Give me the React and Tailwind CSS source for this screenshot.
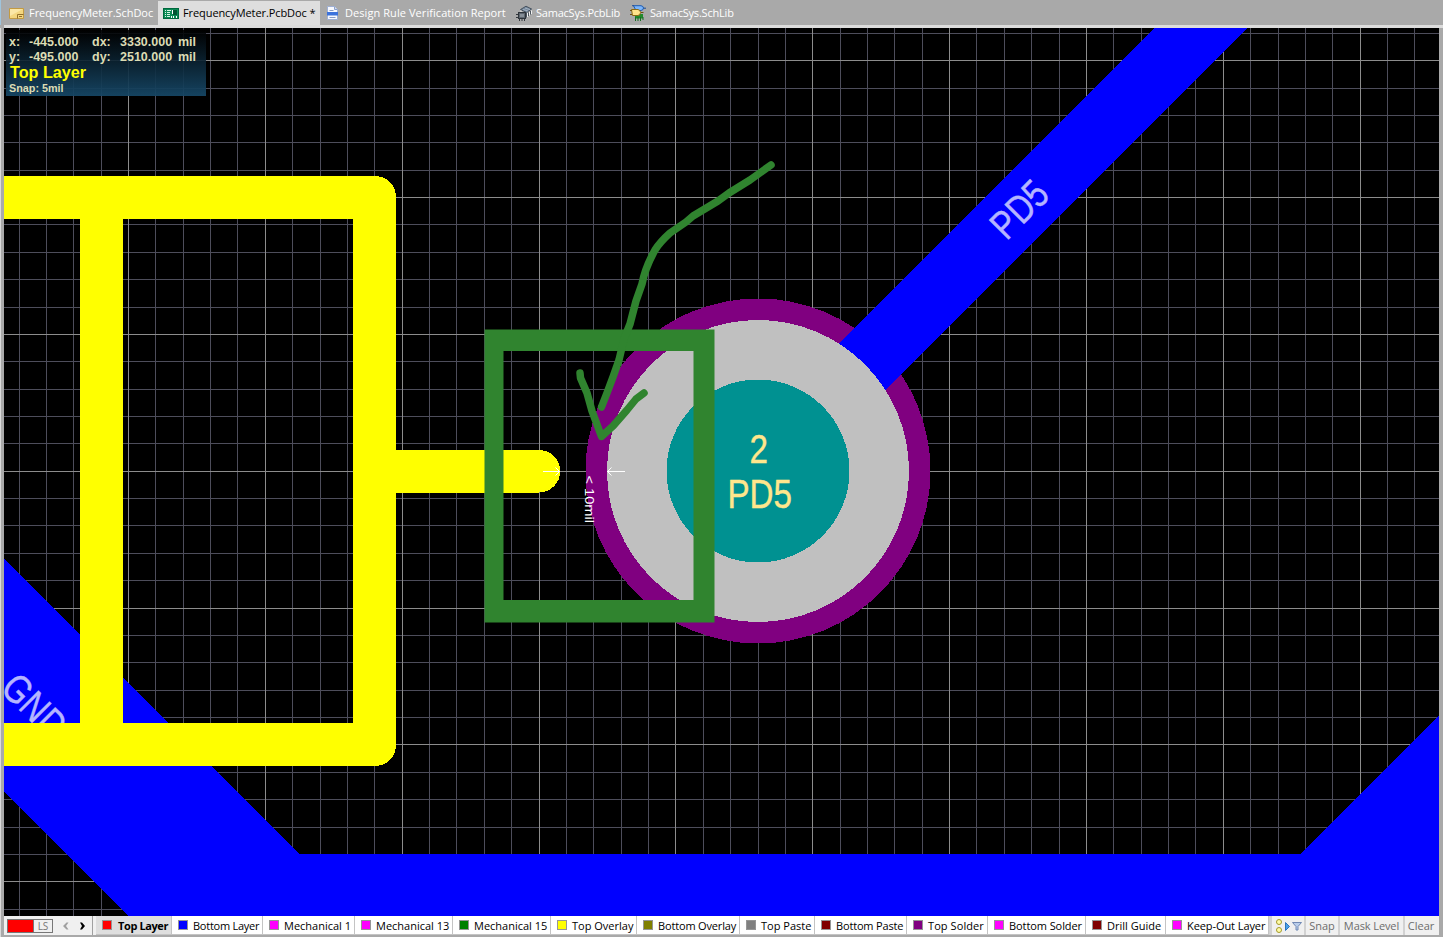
import React from "react";

const STEP = 27.37;
const vLines = Array.from({ length: 53 }, (_, i) => i - 39).map((k) => ({
  p: Math.floor(1086.44 + STEP * k),
  major: (k + 100) % 5 === 0,
}));
const hLines = Array.from({ length: 33 }, (_, i) => i - 1).map((k) => ({
  p: Math.floor(60.7 + STEP * k),
  major: (k + 100) % 5 === 0,
}));

const MINOR = "#4d4d5b";
const MAJOR = "#8c8c8c";

function Grid() {
  const lines = (major) => (
    <>
      {vLines.filter((l) => l.major === major).map((l) => (
        <rect key={"v" + l.p} x={l.p} y="28" width="1" height="888" fill={major ? MAJOR : MINOR} />
      ))}
      {hLines.filter((l) => l.major === major).map((l) => (
        <rect key={"h" + l.p} x="4" y={l.p} width="1435" height="1" fill={major ? MAJOR : MINOR} />
      ))}
    </>
  );
  return (
    <>
      {lines(false)}
      {lines(true)}
    </>
  );
}

function Board() {
  return (
    <svg className="block h-[888px] w-[1435px]" viewBox="4 28 1435 888" fontFamily="Liberation Sans, Arial, sans-serif">
      <g shapeRendering="crispEdges">
        <rect x="4" y="28" width="1435" height="888" fill="#000" />
        <Grid />
        <path d="M4 559 L299 854 H1300 L1439 715 V916 H128 L4 792 Z" fill="#0000ff" />
        <circle cx="758" cy="471" r="172.5" fill="#800080" />
        <path d="M1154 28 H1247.5 L804.5 471 H711 Z" fill="#0000ff" />
        <circle cx="758" cy="471" r="151" fill="#c0c0c0" />
        <circle cx="758" cy="471" r="91.5" fill="#009191" />
      </g>
      <g fill="#b4b4ff" stroke="#b4b4ff" strokeWidth=".4" fontSize="40">
        <text transform="translate(-1 690) rotate(45)" textLength="73" lengthAdjust="spacingAndGlyphs">GND</text>
        <text transform="translate(1006.5 241.5) rotate(-45)" textLength="63.500" lengthAdjust="spacingAndGlyphs">PD5</text>
      </g>
      <g shapeRendering="crispEdges" fill="#ffff00">
        <path fillRule="evenodd" d="M4 176 H375 A21 21 0 0 1 396 197 V450 H539 A21.2 21.2 0 0 1 539 492.5 H396 V745 A21 21 0 0 1 375 766 H4 V723 H80 V219 H4 Z M123 219 V723 H353 V219 Z" />
      </g>
      <g fill="#ffe68c" stroke="#ffe68c" strokeWidth=".4" fontSize="40">
        <text x="749.5" y="462.500" textLength="18.5" lengthAdjust="spacingAndGlyphs">2</text>
        <text x="727.5" y="508" textLength="64.5" lengthAdjust="spacingAndGlyphs">PD5</text>
      </g>
      <g stroke="#fff" strokeWidth="1" fill="none">
        <path d="M543 471.500 H560 M555.500 467.500 L559.500 471.500 L555.500 475.500" />
        <path d="M625 471.500 H607 M611.500 467.500 L607.500 471.500 L611.500 475.500" />
      </g>
      <path d="M560 471.500 H586" stroke={MAJOR} />
      <text transform="translate(585 475.500) rotate(90)" fontSize="13" fill="#fff" textLength="47.500" lengthAdjust="spacingAndGlyphs">&lt; 10mil</text>
      <path fillRule="evenodd" d="M484.500 329.500 H714.500 V622.500 H484.500 Z M503.500 351 V600 H693.500 V351 Z" fill="#30842f" />
      <g fill="none" stroke="#30842f" strokeWidth="7.500" strokeLinecap="round" strokeLinejoin="round">
        <path d="M771 165 L750 180 L729 193 L718 201 L693 216 L686 222 L670 233 Q660 242 655 250 Q645 268 642 284 L636 301 L630 324 L624 339 L619 360 L613 377 L607 393 L601.500 407" />
        <path d="M580 373 L580.500 378 L587 393 L592 411 L601.500 436.500 L613 426 L627 410 L636 399 L644 393" />
      </g>
    </svg>
  );
}

function SchIcon() {
  return (
    <svg className="h-4 w-4" viewBox="0 0 16 16">
      <path d="M.5 3.500 H14.500 V13.500 H.5 Z" fill="#f3d67f" stroke="#c29a43" />
      <path d="M1 4 H14 L1 11 Z" fill="#fbe7a6" />
      <path d="M8.500 13.500 V9.500 H14.500 M10 11.500 H13" stroke="#94702c" fill="none" />
    </svg>
  );
}
function PcbIcon() {
  return (
    <svg className="h-4 w-4" viewBox="0 0 16 16" shapeRendering="crispEdges">
      <rect x="0" y="3" width="16" height="11" fill="#00693d" />
      <rect x="1" y="4" width="14" height="9" fill="#0b8a55" />
      <path d="M2 5h1v1H2zM2 7h1v1H2zM2 9h1v1H2zM2 11h1v1H2zM4 5h4v1H4zM4 7h3v1H4zM4 9h3v1H4zM4 11h3v1H4z" fill="#d6f5e4" />
      <path d="M10 5h4v5h-4z" fill="#005431" />
      <path d="M9 5h1v4H9zM8 11h1v2H8zM10 11h1v2h-1zM13 11h1v2h-1z" fill="#fff" />
    </svg>
  );
}
function ReportIcon() {
  return (
    <svg className="h-4 w-4" viewBox="0 0 16 16">
      <path d="M2.500 1.500 H9.500 L12.500 4.500 V14.500 H2.500 Z" fill="#f7f9ff" stroke="#9fb0d4" />
      <path d="M9.500 1.500 V4.500 H12.500" fill="#d4dff5" stroke="#8da1ca" />
      <path d="M4.500 5.500 H8.500 M4.500 12.500 H10.500" stroke="#879bc5" />
      <rect x="2" y="7" width="11" height="3.500" fill="#3b72dc" />
    </svg>
  );
}
function PcbLibIcon() {
  return (
    <svg className="h-4 w-4" viewBox="0 0 16 16">
      <path d="M4.500 4.500 L10 1.200 L15.600 4 L10.500 7.500 Z" fill="#75879b" stroke="#35414f" strokeWidth=".8" />
      <path d="M7 4.500 L12 6 M9 3 L14 4.600" stroke="#b6c3d0" strokeWidth=".7" />
      <path d="M5 5.500V7.500M11.500 8V12M13.500 7V10.500M15.500 5.500V9" stroke="#f0f0f0" />
      <path d="M10.500 8V12.500M12.500 7.500V11M14.500 6V9.500" stroke="#414b55" strokeWidth=".9" />
      <rect x="2.500" y="7.500" width="7" height="6" fill="#5d656e" stroke="#2f353b" />
      <rect x="4" y="9" width="4" height="3" fill="#868e96" />
      <path d="M0 9.500h2M0 12.500h2M3.500 14v2M6 14v2M8.500 14v2" stroke="#33383e" />
    </svg>
  );
}
function SchLibIcon() {
  return (
    <svg className="h-4 w-4" viewBox="0 0 16 16">
      <path d="M3.500 .7 H11 Q13.500 1.200 13.500 3 Q13.500 5 11 5.500 H6 Z" fill="#7db6fa" stroke="#1e5bb0" />
      <path d="M2 .7H4M13.500 3.200H16" stroke="#1e4f99" />
      <rect x="5" y="9" width="8" height="4.500" fill="#218a2b" />
      <path d="M5.500 12v4M8 12v4M10.500 12v4M13 12v3" stroke="#176e22" />
      <path d="M1.500 4.500 H8 Q10.500 5 10.500 7.500 Q10.500 10 8 10.500 H2.500 Z" fill="#ffe38a" stroke="#8c6a13" />
      <path d="M0 5.500H2M0 9.500H2M11 7.500H13.500" stroke="#6b4f10" />
    </svg>
  );
}

const docs = [
  { icon: SchIcon, label: "FrequencyMeter.SchDoc", cls: "w-[154px] text-white", t: "tracking-[-0.04px]" },
  { icon: PcbIcon, label: "FrequencyMeter.PcbDoc *", cls: "w-[162px] bg-[#dedede] text-black", t: "tracking-[-0.09px]" },
  { icon: ReportIcon, label: "Design Rule Verification Report", cls: "w-[191px] text-white", t: "tracking-[0.07px]" },
  { icon: PcbLibIcon, label: "SamacSys.PcbLib", cls: "w-[114px] text-white", t: "tracking-[-0.22px]" },
  { icon: SchLibIcon, label: "SamacSys.SchLib", cls: "w-[114px] text-white", t: "tracking-[-0.2px]" },
];

const layers = [
  { name: "Top Layer", w: "w-[76px]", c: "bg-[#ff0000]", active: true, t: "tracking-[-0.4px] pl-px" },
  { name: "Bottom Layer", w: "w-[91px]", c: "bg-[#0000ff]", t: "tracking-[-0.25px]" },
  { name: "Mechanical 1", w: "w-[92px]", c: "bg-[#ff00ff]", t: "" },
  { name: "Mechanical 13", w: "w-[98px]", c: "bg-[#ff00ff]", t: "" },
  { name: "Mechanical 15", w: "w-[98px]", c: "bg-[#008000]", t: "" },
  { name: "Top Overlay", w: "w-[86px]", c: "bg-[#ffff00]", t: "" },
  { name: "Bottom Overlay", w: "w-[103px]", c: "bg-[#808000]", t: "tracking-[-0.16px]" },
  { name: "Top Paste", w: "w-[75px]", c: "bg-[#808080]", t: "" },
  { name: "Bottom Paste", w: "w-[92px]", c: "bg-[#800000]", t: "tracking-[-0.17px]" },
  { name: "Top Solder", w: "w-[81px]", c: "bg-[#800080]", t: "tracking-[0.08px]" },
  { name: "Bottom Solder", w: "w-[98px]", c: "bg-[#ff00ff]", t: "tracking-[-0.08px]" },
  { name: "Drill Guide", w: "w-[80px]", c: "bg-[#800000]", t: "" },
  { name: "Keep-Out Layer", w: "w-[103px]", c: "bg-[#ff00ff]", t: "tracking-[-0.08px]" },
];

function Hud() {
  return (
    <div className="absolute left-[2px] top-[2px] h-[66px] w-[200px] bg-linear-to-b/srgb from-[#000000e0] to-[#164766f0] font-['Liberation_Sans',Arial,sans-serif] font-bold whitespace-pre text-[#dcdcb4]">
      <div className="grid h-[34px] grid-cols-[20px_63px_28px_58px_24px] pl-[3px] pt-[5px] text-[12.5px] leading-[15px]">
        <span>x:</span><span>-445.000</span><span>dx:</span><span>3330.000</span><span>mil</span>
        <span>y:</span><span>-495.000</span><span>dy:</span><span>2510.000</span><span>mil</span>
      </div>
      <div className="pl-[4px] text-[16.200px] leading-[17px] text-[#ffff00]">Top Layer</div>
      <div className="pl-[3px] text-[10.800px] leading-[14px]">Snap: 5mil</div>
    </div>
  );
}

export default function App() {
  return (
    <div className="flex h-[937px] w-[1443px] flex-col overflow-hidden bg-[#a9a9a9] font-['Open_Sans','Noto_Sans',sans-serif] text-[11px] whitespace-nowrap">
      <div className="flex h-[25px] shrink-0 border-l border-[#9fc4dc] pl-[3px] pt-px">
        {docs.map((d) => (
          <div key={d.label} className={"flex shrink-0 items-center gap-[4px] pl-[5px] " + d.cls}>
            <span className="shrink-0"><d.icon /></span>
            <span className={d.t}>{d.label}</span>
          </div>
        ))}
      </div>
      <div className="ml-[4px] h-[3px] shrink-0 bg-[#dcdcdc]" />
      <div className="flex h-[888px] shrink-0 border-l border-[#dadada] pl-[3px]">
        <div className="relative h-[888px] w-[1435px]">
          <Board />
          <Hud />
        </div>
      </div>
      <div className="flex h-[21px] shrink-0 border-l border-[#dadada] pl-[3px]">
        <div className="flex h-[20px] w-[1435px] border-b border-[#a9a9a9] bg-[#f0f0f0]">
          <div className="flex w-[89px] shrink-0 items-center border-r border-[#a0a0a0] pl-[3px] pt-px">
            <div className="flex h-[14px] w-[46px] border border-[#777]">
              <div className="w-[25px] bg-[#ff0000]" />
              <div className="flex flex-1 items-center justify-center border-l border-[#777] pt-px text-[10px] text-[#777]">LS</div>
            </div>
            <svg className="ml-[8px] h-[8px] w-[24px]" viewBox="0 0 24 8">
              <path d="M5.500 .5 H7.500 L5 4 L7.500 7.500 H5.500 L2 4 Z" fill="#a0a0a0" />
              <path d="M19 .5 H21 L24 4 L21 7.500 H19 L21 4 Z" fill="#000" />
            </svg>
          </div>
          <div className="w-[3px] shrink-0" />
          {layers.map((l) => (
            <div key={l.name} className={"flex shrink-0 items-center border-r border-b border-[#c4c4c4] pl-[6px] " + l.w + (l.active ? " bg-[#dedede] font-bold" : " bg-white")}>
              <span className={"mr-[5px] h-[10px] w-[10px] shrink-0 border border-[#969696] " + l.c} />
              <span className={"pt-[2px] " + l.t}>{l.name}</span>
            </div>
          ))}
          <div className="flex flex-1 gap-[2px] bg-[#d2d2d2] pl-[3px] text-[#6d6d6d]">
            <div className="flex w-[32px] items-center bg-[#f0f0f0] pl-[3px]">
              <svg className="h-[16px] w-[28px]" viewBox="0 0 28 16">
                <circle cx="4" cy="4" r="2.500" fill="#fffca8" stroke="#a49a2c" />
                <circle cx="4" cy="12" r="2.500" fill="#fffca8" stroke="#a49a2c" />
                <path d="M10.500 4.500 L14.500 8.500 L10.500 12.500 Z" fill="#4aa0e6" stroke="#2a74be" />
                <path d="M17.500 4.500 H26.500 L23 8.500 V12 H21 V8.500 Z" fill="#b9cdea" stroke="#7189b4" />
              </svg>
            </div>
            <div className="flex w-[32px] items-center justify-center bg-[#f0f0f0] pt-px">Snap</div>
            <div className="flex w-[63px] items-center justify-center bg-[#f0f0f0] pt-px tracking-[-0.1px]">Mask Level</div>
            <div className="flex flex-1 items-center justify-center bg-[#f0f0f0] pr-[2px] pt-px">Clear</div>
          </div>
        </div>
      </div>
    </div>
  );
}
